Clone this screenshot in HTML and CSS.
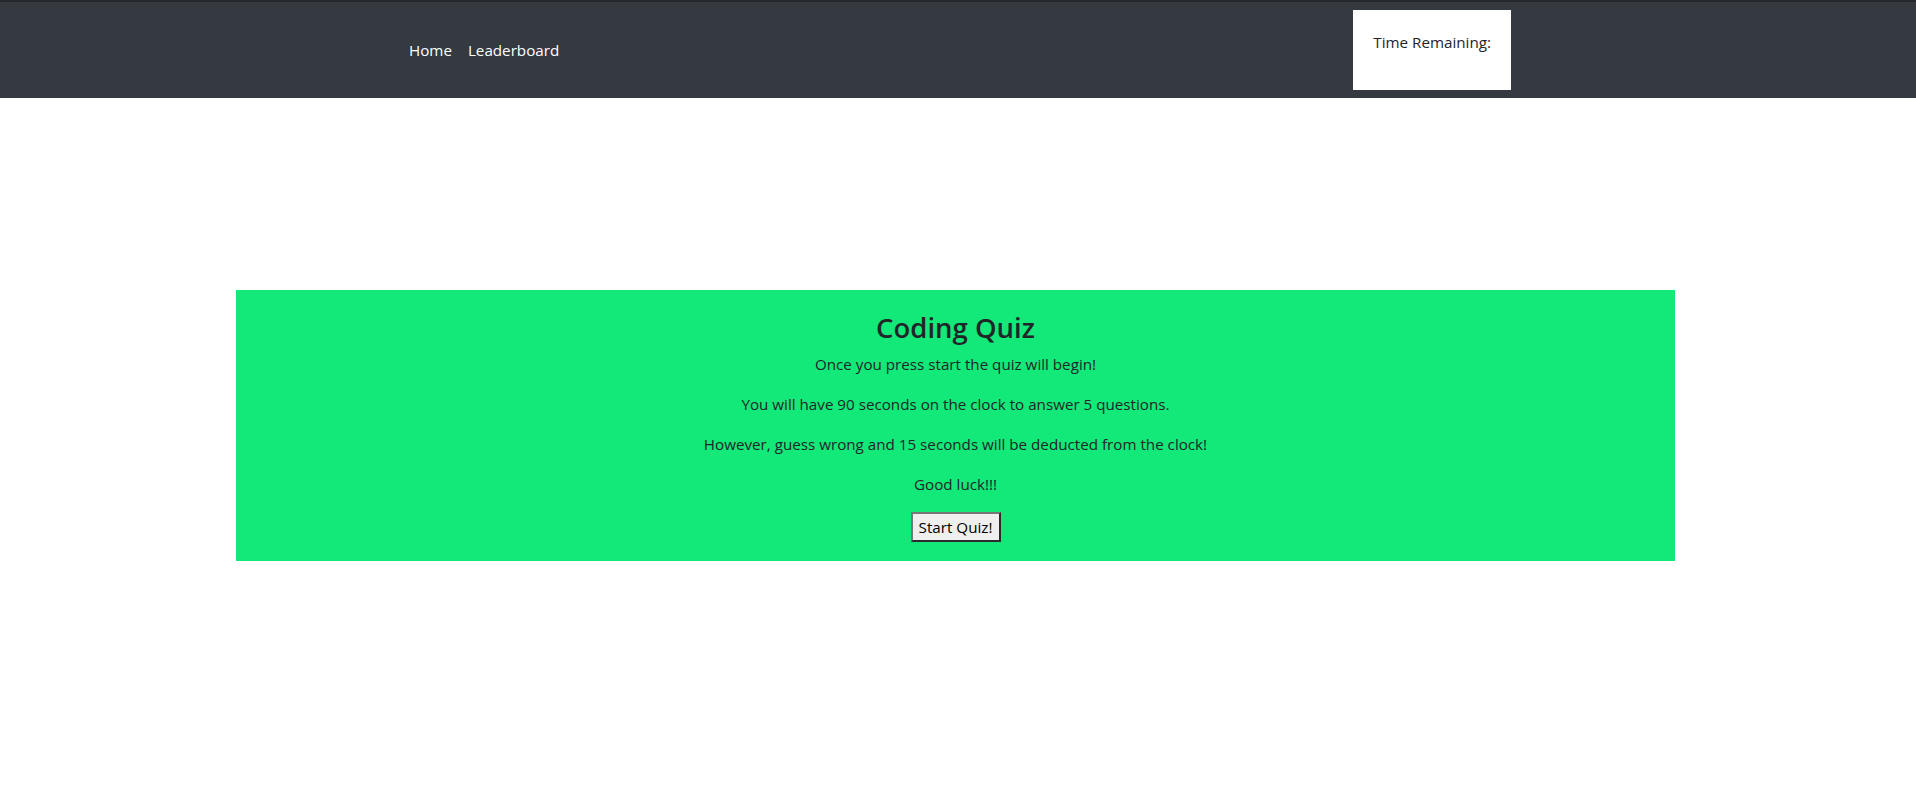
FILE: index.html
```html
<!DOCTYPE html>
<html lang="en">
<head>
<meta charset="utf-8">
<title>Coding Quiz</title>
<link rel="stylesheet" href="styles.css">
</head>
<body>
<header class="navbar">
  <div class="nav-inner">
    <nav class="nav-links">
      <a class="nav-link" href="#">Home</a>
      <a class="nav-link" href="#">Leaderboard</a>
    </nav>
    <div class="timer">
      <p>Time Remaining:</p>
    </div>
  </div>
</header>
<main class="main">
  <section class="quiz-card">
    <h2 class="quiz-title">Coding Quiz</h2>
    <p>Once you press start the quiz will begin!</p>
    <p>You will have 90 seconds on the clock to answer 5 questions.</p>
    <p>However, guess wrong and 15 seconds will be deducted from the clock!</p>
    <p>Good luck!!!</p>
    <div class="actions"><button class="start-btn" type="button">Start Quiz!</button></div>
  </section>
</main>
</body>
</html>
```

FILE: styles.css
```css
* { box-sizing: border-box; }
html, body { margin: 0; padding: 0; }
body {
  font-family: "Open Sans", "Noto Sans", sans-serif;
  font-size: 15.2px;
  line-height: 24px;
  color: #212529;
  background: #fff;
}
.navbar {
  background: #343a40;
  border-top: 2px solid #25282c;
  padding: 8px 0;
}
.nav-inner {
  width: 1110px;
  margin-left: calc(50% - 557px);
  display: flex;
  align-items: center;
  justify-content: space-between;
}
.nav-links { display: flex; }
.nav-link {
  color: #fff;
  text-decoration: none;
  padding: 8px 8px;
}
.timer {
  background: #fff;
  padding: 20px;
  height: 80px;
}
.timer p { margin: 0 0 16px; }
.main { padding-top: 192px; }
.quiz-card {
  width: 1439px;
  margin-left: calc(50% - 722px);
  background: #12e978;
  text-align: center;
  padding: 21px 0 19px;
}
.quiz-title {
  font-size: 27.5px;
  font-weight: 600;
  line-height: 33px;
  margin: 0 0 8px;
}
.quiz-card p { margin: 0 0 16px; }
.actions { display: flex; justify-content: center; }
.start-btn {
  font-family: inherit;
  font-size: 15.2px;
  color: #000;
  background: #efefef;
  height: 30px;
  width: 90px;
  padding: 0;
  border: 2px solid;
  border-color: #767676 #2b2b2b #2b2b2b #767676;
}
```
